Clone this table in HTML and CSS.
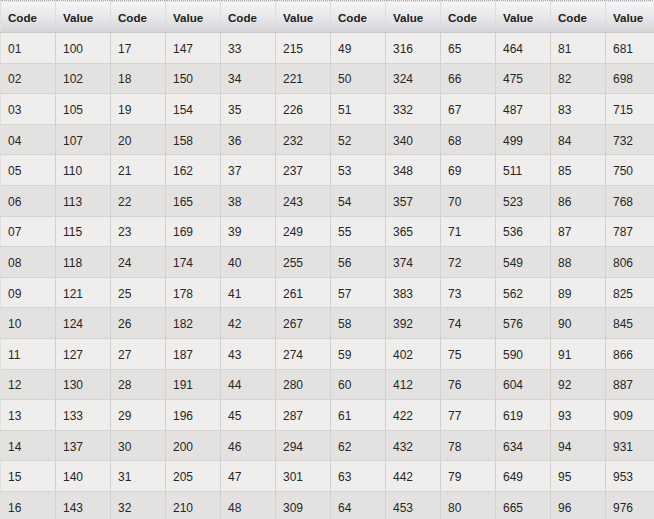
FILE: index.html
```html
<!DOCTYPE html>
<html>
<head>
<meta charset="utf-8">
<link rel="stylesheet" href="styles.css">
</head>
<body>
<table class="codes">
<colgroup>
<col><col><col><col><col><col><col><col><col><col><col><col>
</colgroup>
<thead>
<tr><th>Code</th><th>Value</th><th>Code</th><th>Value</th><th>Code</th><th>Value</th><th>Code</th><th>Value</th><th>Code</th><th>Value</th><th>Code</th><th>Value</th></tr>
</thead>
<tbody>
<tr><td>01</td><td>100</td><td>17</td><td>147</td><td>33</td><td>215</td><td>49</td><td>316</td><td>65</td><td>464</td><td>81</td><td>681</td></tr>
<tr><td>02</td><td>102</td><td>18</td><td>150</td><td>34</td><td>221</td><td>50</td><td>324</td><td>66</td><td>475</td><td>82</td><td>698</td></tr>
<tr><td>03</td><td>105</td><td>19</td><td>154</td><td>35</td><td>226</td><td>51</td><td>332</td><td>67</td><td>487</td><td>83</td><td>715</td></tr>
<tr><td>04</td><td>107</td><td>20</td><td>158</td><td>36</td><td>232</td><td>52</td><td>340</td><td>68</td><td>499</td><td>84</td><td>732</td></tr>
<tr><td>05</td><td>110</td><td>21</td><td>162</td><td>37</td><td>237</td><td>53</td><td>348</td><td>69</td><td>511</td><td>85</td><td>750</td></tr>
<tr><td>06</td><td>113</td><td>22</td><td>165</td><td>38</td><td>243</td><td>54</td><td>357</td><td>70</td><td>523</td><td>86</td><td>768</td></tr>
<tr><td>07</td><td>115</td><td>23</td><td>169</td><td>39</td><td>249</td><td>55</td><td>365</td><td>71</td><td>536</td><td>87</td><td>787</td></tr>
<tr><td>08</td><td>118</td><td>24</td><td>174</td><td>40</td><td>255</td><td>56</td><td>374</td><td>72</td><td>549</td><td>88</td><td>806</td></tr>
<tr><td>09</td><td>121</td><td>25</td><td>178</td><td>41</td><td>261</td><td>57</td><td>383</td><td>73</td><td>562</td><td>89</td><td>825</td></tr>
<tr><td>10</td><td>124</td><td>26</td><td>182</td><td>42</td><td>267</td><td>58</td><td>392</td><td>74</td><td>576</td><td>90</td><td>845</td></tr>
<tr><td>11</td><td>127</td><td>27</td><td>187</td><td>43</td><td>274</td><td>59</td><td>402</td><td>75</td><td>590</td><td>91</td><td>866</td></tr>
<tr><td>12</td><td>130</td><td>28</td><td>191</td><td>44</td><td>280</td><td>60</td><td>412</td><td>76</td><td>604</td><td>92</td><td>887</td></tr>
<tr><td>13</td><td>133</td><td>29</td><td>196</td><td>45</td><td>287</td><td>61</td><td>422</td><td>77</td><td>619</td><td>93</td><td>909</td></tr>
<tr><td>14</td><td>137</td><td>30</td><td>200</td><td>46</td><td>294</td><td>62</td><td>432</td><td>78</td><td>634</td><td>94</td><td>931</td></tr>
<tr><td>15</td><td>140</td><td>31</td><td>205</td><td>47</td><td>301</td><td>63</td><td>442</td><td>79</td><td>649</td><td>95</td><td>953</td></tr>
<tr><td>16</td><td>143</td><td>32</td><td>210</td><td>48</td><td>309</td><td>64</td><td>453</td><td>80</td><td>665</td><td>96</td><td>976</td></tr>
</tbody>
</table>
</body>
</html>
```
FILE: styles.css
```css
html, body {
  margin: 0;
  padding: 0;
  overflow: hidden;
  background: #efeeec;
}
.codes {
  border-collapse: collapse;
  table-layout: fixed;
  width: 660px;
  font-family: "Liberation Sans", Arial, sans-serif;
  font-size: 12px;
  color: #262626;
  border-top: 1px dotted #a9a9a9;
}
.codes col {
  width: 55px;
}
.codes th {
  height: 32px;
  box-sizing: border-box;
  padding: 1px 0 0 7px;
  text-align: left;
  font-weight: bold;
  font-size: 11.6px;
  color: #202020;
  background: linear-gradient(#f6f6f8, #e6e6ea 55%, #d4d4d9);
  border-left: 1px solid #dcdce0;
  border-bottom: 1px solid #c9c9cc;
}
.codes td {
  height: 30.6px;
  box-sizing: border-box;
  padding: 2px 0 0 7px;
  text-align: left;
  border-left: 1px solid #d3d1cf;
  border-bottom: 1px solid #d6d4d2;
}
.codes th:first-child,
.codes td:first-child {
  border-left: 1px solid #e2e0de;
}
.codes tbody tr:nth-child(odd) td {
  background: #efeeec;
}
.codes tbody tr:nth-child(even) td {
  background: #e4e2e0;
}
```
